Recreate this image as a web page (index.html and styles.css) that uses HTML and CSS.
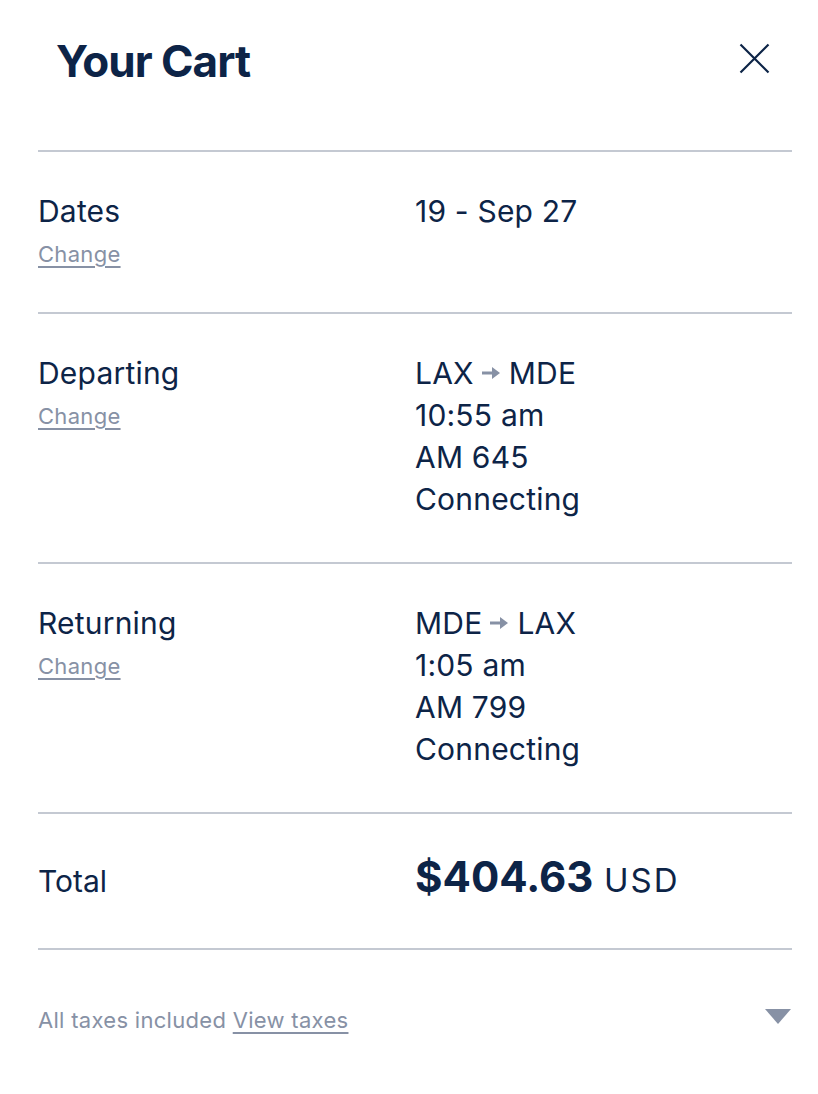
FILE: index.html
```
<!DOCTYPE html>
<html>
<head>
<title>Your Cart</title>
<link rel="stylesheet" href="styles.css">
</head>
<body>

<div class="cart">

  <div class="cart-head">
    <h1>Your Cart</h1>
    <a href="#" class="close" title="Close">
      <svg width="31" height="31" viewBox="0 0 31 31"><path d="M1.5 1.5 L29.5 29.5 M29.5 1.5 L1.5 29.5" stroke="#0d2447" stroke-width="2.2" fill="none"/></svg>
    </a>
  </div>

  <div class="row">
    <div class="label">
      Dates
      <a href="#" class="change">Change</a>
    </div>
    <div class="info">19 - Sep 27</div>
  </div>

  <div class="row">
    <div class="label">
      Departing
      <a href="#" class="change">Change</a>
    </div>
    <div class="info">
      LAX<svg class="arrow" width="18" height="14" viewBox="0 0 18 14"><path d="M0 5.6 H10 V1 L18 7 L10 13 V8.4 H0 Z" fill="#8791a5"/></svg>MDE<br>
      10:55 am<br>
      AM 645<br>
      Connecting
    </div>
  </div>

  <div class="row">
    <div class="label">
      Returning
      <a href="#" class="change">Change</a>
    </div>
    <div class="info">
      MDE<svg class="arrow" width="18" height="14" viewBox="0 0 18 14"><path d="M0 5.6 H10 V1 L18 7 L10 13 V8.4 H0 Z" fill="#8791a5"/></svg>LAX<br>
      1:05 am<br>
      AM 799<br>
      Connecting
    </div>
  </div>

  <div class="row total">
    <div class="label">Total</div>
    <div class="info"><span class="amount">$404.63</span> <span class="currency">USD</span></div>
  </div>

  <div class="foot">
    <div class="taxes">All taxes included <a href="#">View taxes</a></div>
    <span class="toggle"></span>
  </div>

</div>

</body>
</html>
```

FILE: styles.css
```
  body         { margin: 0; background: #fff; font-family: Inter, "Liberation Sans", sans-serif; color: #0d2447; }
  a            { color: #8791a5; }

  .cart        { padding: 0 26px 0 38px; }

  .cart-head   { display: flex; justify-content: space-between; align-items: flex-start; height: 150px; box-sizing: border-box; padding: 35px 22px 0 18px; }
  .cart-head h1 { margin: 0; font-size: 44px; line-height: 53px; font-weight: 700; letter-spacing: -1px; }
  .close       { display: block; margin-top: 8px; line-height: 0; }

  .row         { display: grid; grid-template-columns: 377px 1fr; border-top: 2px solid #c4c9d2; padding: 38px 0 42px; font-size: 30px; line-height: 42px; letter-spacing: 0.2px; }
  .change      { display: block; width: fit-content; margin: 11px 0 4px; font-size: 22px; line-height: 23px; letter-spacing: 0.3px; text-underline-offset: 4px; }
  .arrow       { margin: 0 9px 0 8px; vertical-align: 4px; }

  .total       { padding: 34px 0 38px; line-height: 57px; align-items: baseline; }
  .total .label { letter-spacing: 0; }
  .amount      { font-size: 42px; font-weight: 700; letter-spacing: 0; }
  .currency    { font-size: 33px; letter-spacing: 2px; margin-left: 2px; }

  .foot        { display: flex; justify-content: space-between; align-items: center; border-top: 2px solid #c4c9d2; padding: 55px 1px 0 0; font-size: 22px; line-height: 30px; letter-spacing: 0.3px; color: #8791a5; }
  .foot a      { text-underline-offset: 4px; }
  .toggle      { width: 0; height: 0; border-left: 13.5px solid transparent; border-right: 13.5px solid transparent; border-top: 15px solid #8791a5; margin-top: -8px; }
```
